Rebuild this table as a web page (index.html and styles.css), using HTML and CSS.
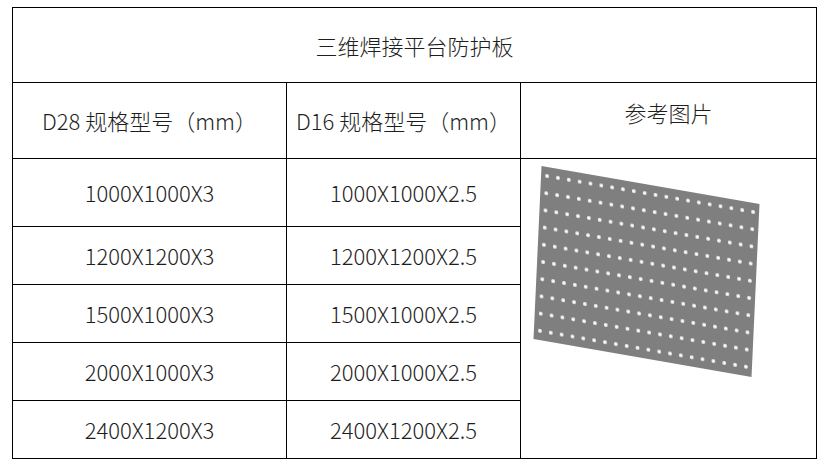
FILE: index.html
```html
<!DOCTYPE html>
<html lang="zh-CN">
<head>
<meta charset="utf-8">
<title>三维焊接平台防护板</title>
<link rel="stylesheet" href="styles.css">
</head>
<body>
<table class="spec">
  <colgroup>
    <col class="c1">
    <col class="c2">
    <col class="c3">
  </colgroup>
  <tr class="r-title"><td colspan="3">三维焊接平台防护板</td></tr>
  <tr class="r-head">
    <td>D28 规格型号（mm）</td>
    <td>D16 规格型号（mm）</td>
    <td class="pic-head">参考图片</td>
  </tr>
  <tr class="r-first">
    <td>1000X1000X3</td>
    <td>1000X1000X2.5</td>
    <td class="pic" rowspan="5">
      <svg class="panel" width="240" height="220" viewBox="0 0 240 220" xmlns="http://www.w3.org/2000/svg">
        <defs>
          <pattern id="holes" x="0.6" y="0.4" width="10.84" height="17.2" patternUnits="userSpaceOnUse">
            <circle cx="5.4" cy="8.6" r="1.9" fill="#f6f6f6"/>
          </pattern>
        </defs>
        <g transform="matrix(1 0.1743 -0.0462 1 20.5 7)">
          <rect x="0" y="0" width="218" height="173" fill="#7f7f7f"/>
          <rect x="0" y="0" width="218" height="173" fill="url(#holes)"/>
        </g>
      </svg>
    </td>
  </tr>
  <tr class="r-row"><td>1200X1200X3</td><td>1200X1200X2.5</td></tr>
  <tr class="r-row"><td>1500X1000X3</td><td>1500X1000X2.5</td></tr>
  <tr class="r-row"><td>2000X1000X3</td><td>2000X1000X2.5</td></tr>
  <tr class="r-row"><td>2400X1200X3</td><td>2400X1200X2.5</td></tr>
</table>
</body>
</html>
```
FILE: styles.css
```css
html, body {
  margin: 0;
  padding: 0;
  background: #ffffff;
}
body {
  padding: 7px 0 0 12px;
  font-family: "Noto Sans CJK SC", "Noto Sans", sans-serif;
  font-weight: 300;
  font-size: 22px;
  color: #1e1e1e;
}
.spec {
  border-collapse: collapse;
  table-layout: fixed;
  width: 804px;
}
.spec td {
  border: 1px solid #000;
  padding: 0;
  text-align: center;
  vertical-align: middle;
  line-height: 1.2;
  white-space: nowrap;
}
.c1 { width: 274px; }
.c2 { width: 234px; }
.c3 { width: 296px; }
.r-title { height: 75px; }
.r-head { height: 76px; }
.r-first { height: 68px; }
.r-row { height: 58px; }
.spec td.pic-head {
  padding-bottom: 16px;
}
.spec td.pic {
  vertical-align: top;
  text-align: left;
  padding: 0;
}
.panel {
  display: block;
}
```
